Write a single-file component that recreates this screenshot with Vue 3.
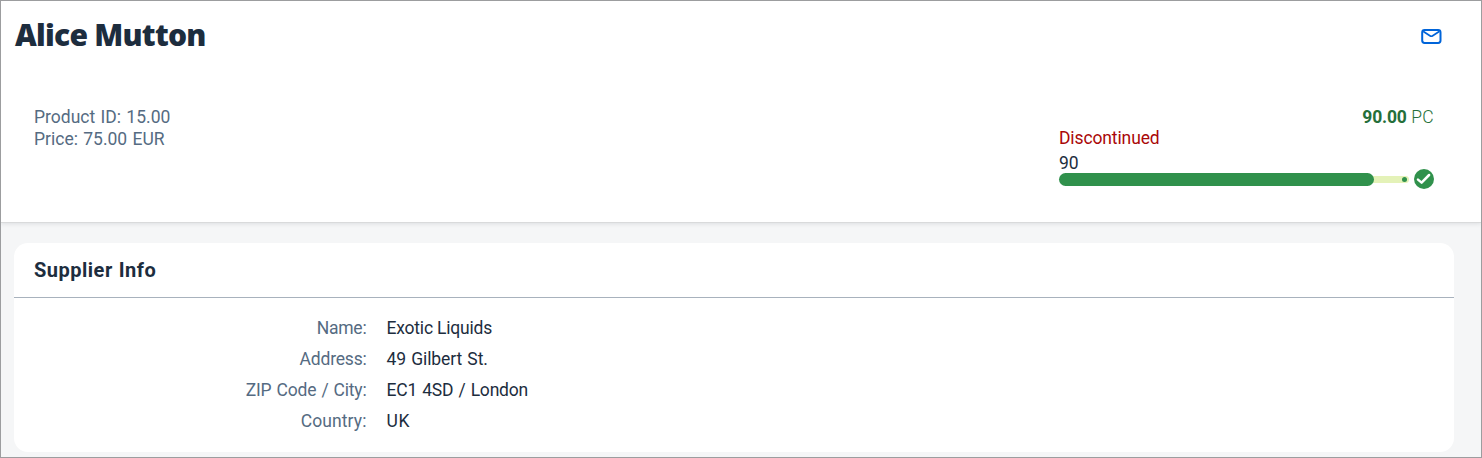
<script setup>
const attributes = [
  { label: 'Product ID', value: '15.00' },
  { label: 'Price', value: '75.00 EUR' },
]
const supplier = [
  { label: 'Name', value: 'Exotic Liquids', cls: 'name' },
  { label: 'Address', value: '49 Gilbert St.', cls: 'address' },
  { label: 'ZIP Code / City', value: 'EC1 4SD / London', cls: 'city' },
  { label: 'Country', value: 'UK', cls: 'country' },
]
const percent = 90
</script>

<template>
  <div class="page">
    <header class="header">
      <div class="title-row">
        <h1>Alice Mutton</h1>
        <button class="mail" aria-label="Send email">
          <svg width="22" height="16" viewBox="0 0 22 16" fill="none" stroke="#0064d9" stroke-width="2" stroke-linecap="round" stroke-linejoin="round">
            <rect x="2.2" y="1" width="18.3" height="13" rx="2.4" />
            <path d="M3.8 2.8 9.9 6.8Q11.3 7.7 12.7 6.8L18.8 2.8" stroke-width="1.7" />
          </svg>
        </button>
      </div>
      <div class="content">
        <div class="attributes">
          <div v-for="a in attributes" :key="a.label">{{ a.label }}: {{ a.value }}</div>
        </div>
        <div class="status">
          <div class="quantity"><b>90.00</b> <span>PC</span></div>
          <div class="discontinued">Discontinued</div>
          <div class="percent">{{ percent }}</div>
          <div class="progress">
            <div class="track">
              <div class="bar" :style="{ width: percent + '%' }"></div>
              <div class="rest"><i></i></div>
            </div>
            <svg class="check" width="20" height="20" viewBox="0 0 20 20">
              <circle cx="10" cy="10" r="10" fill="#30914c" />
              <path d="M4 10.6 7.6 13.6 15.1 6" fill="none" stroke="#fff" stroke-width="2.5" stroke-linecap="round" stroke-linejoin="round" />
            </svg>
          </div>
        </div>
      </div>
    </header>
    <section class="card">
      <h2>Supplier Info</h2>
      <dl>
        <template v-for="s in supplier" :key="s.label">
          <dt :class="s.cls">{{ s.label }}:</dt>
          <dd :class="s.cls">{{ s.value }}</dd>
        </template>
      </dl>
    </section>
  </div>
</template>

<style>
body { margin: 0; overflow: hidden; }
</style>

<style scoped>
.page {
  box-sizing: border-box;
  width: 1482px;
  height: 458px;
  border: 1px solid #9c9d9f;
  background: #f5f6f7;
  overflow: hidden;
  color: #1d2d3e;
  font: 17.5px/22px Roboto, "Liberation Sans", sans-serif;
  letter-spacing: -0.2px;
}
.header {
  box-sizing: border-box;
  height: 221px;
  background: #fff;
  box-shadow: 0 1px 0 #d9dadb, 0 2px 4px rgba(85, 95, 105, 0.15);
}
.title-row {
  display: flex;
  justify-content: space-between;
  align-items: center;
  height: 70px;
  padding: 0 39px 0 14px;
}
h1 {
  margin: 0 0 2px;
  font: 900 30px/40px "Noto Sans", "Open Sans", sans-serif;
  letter-spacing: -0.75px;
}
.mail { display: flex; margin: 2px 0 0; padding: 0; border: 0; background: none; }
.content {
  display: flex;
  justify-content: space-between;
  padding: 35px 47px 0 33px;
}
.attributes { color: #556b82; letter-spacing: 0; word-spacing: 1px; }
.status { width: 375px; }
.quantity { color: #256f3a; text-align: right; height: 21px; word-spacing: 0.5px; }
.quantity b { font-weight: 700; }
.quantity span { font-weight: 300; letter-spacing: 0.3px; }
.discontinued { color: #aa0808; height: 25px; letter-spacing: -0.12px; }
.percent { height: 17px; }
.progress { display: flex; align-items: center; justify-content: space-between; height: 20px; }
.track { display: flex; align-items: center; width: 350px; }
.bar { height: 13px; border-radius: 7px; background: #30914c; position: relative; }
.rest {
  flex: 1;
  display: flex;
  align-items: center;
  justify-content: flex-end;
  box-sizing: border-box;
  height: 7px;
  margin-left: -4px;
  padding-right: 2px;
  border-radius: 0 4px 4px 0;
  background: #e4f2b8;
}
.rest i { width: 5px; height: 5px; border-radius: 50%; background: #30914c; }
.card {
  box-sizing: border-box;
  width: 1440px;
  height: 209px;
  margin: 21px 0 0 13px;
  border-radius: 14px;
  background: #fff;
}
h2 {
  margin: 0;
  box-sizing: border-box;
  height: 55px;
  padding-left: 20px;
  border-bottom: 1px solid #a8b2bd;
  font-size: 20px;
  line-height: 54px;
  font-weight: 700;
  letter-spacing: 0.5px;
  word-spacing: 0.5px;
}
dl {
  display: grid;
  grid-template-columns: 352.5px 1fr;
  column-gap: 20px;
  grid-auto-rows: 31px;
  margin: 0;
  padding-top: 15px;
  line-height: 31px;
}
dt { color: #556b82; text-align: right; }
dd { margin: 0; }
.address, .city { word-spacing: 1px; }
dd.address { letter-spacing: -0.1px; }
dt.country { letter-spacing: 0.1px; }
dd.country { letter-spacing: 0.6px; }
</style>
